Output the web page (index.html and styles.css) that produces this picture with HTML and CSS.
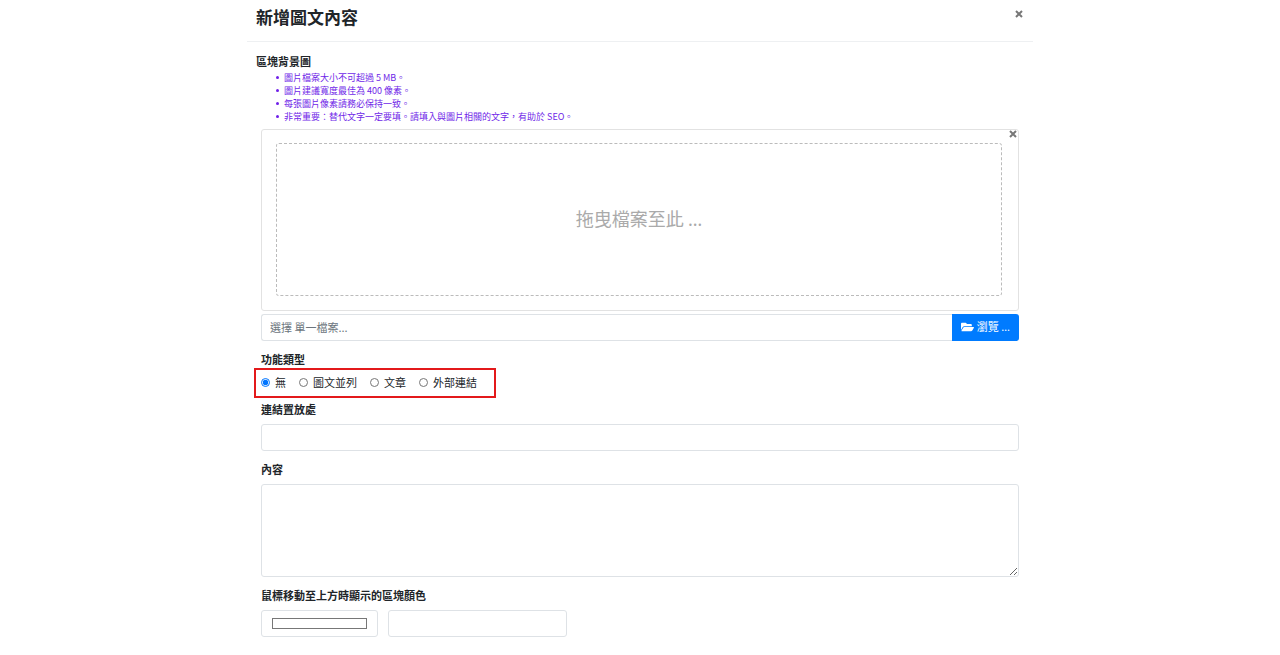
FILE: index.html
```html
<!DOCTYPE html>
<html lang="zh-Hant">
<head>
<meta charset="utf-8">
<meta name="viewport" content="width=device-width, initial-scale=1">
<title>新增圖文內容</title>
<link rel="stylesheet" href="styles.css">
</head>
<body>
<main class="panel">
  <header class="panel-header">
    <h1 class="panel-title">新增圖文內容</h1>
    <button class="close" type="button" aria-label="關閉"><svg class="close-icon" viewBox="0 0 8 8"><path d="M1 1l6 6M7 1L1 7"/></svg></button>
  </header>
  <form class="panel-body">
    <section class="intro">
      <h2 class="label">區塊背景圖</h2>
      <ul class="notes">
        <li class="note">圖片檔案大小不可超過 5 MB。</li>
        <li class="note">圖片建議寬度最佳為 400 像素。</li>
        <li class="note">每張圖片像素請務必保持一致。</li>
        <li class="note">非常重要：替代文字一定要填。請填入與圖片相關的文字，有助於 SEO。</li>
      </ul>
    </section>
    <div class="preview">
      <button class="close preview-close" type="button" aria-label="移除"><svg class="close-icon" viewBox="0 0 8 8"><path d="M1 1l6 6M7 1L1 7"/></svg></button>
      <div class="drop-zone"><span>拖曳檔案至此 <span class="dots">…</span></span></div>
    </div>
    <div class="file-row">
      <input class="control file-name" type="text" placeholder="選擇 單一檔案..." aria-label="選擇 單一檔案" readonly>
      <button class="browse" type="button"><svg class="folder" viewBox="0 0 576 512"><path d="M572.7 292.1L500.300 416.200A64 64 0 0 1 445 448H45.100c-18.500 0-30.100-20.100-20.700-36.100l72.400-124.100A64 64 0 0 1 152 256h400c18.500 0 30 20.100 20.700 36.100zM152 224h328v-48c0-26.500-21.500-48-48-48H272l-64-64H48C21.500 64 0 85.500 0 112v278.100l69.100-118.400A96.200 96.200 0 0 1 152 224z"/></svg><span>瀏覽 <span class="dots">…</span></span></button>
    </div>
    <fieldset class="types">
      <legend class="label">功能類型</legend>
      <div class="options">
        <label class="option"><input class="radio" type="radio" name="type" checked>無</label>
        <label class="option"><input class="radio" type="radio" name="type">圖文並列</label>
        <label class="option"><input class="radio" type="radio" name="type">文章</label>
        <label class="option"><input class="radio" type="radio" name="type">外部連結</label>
      </div>
    </fieldset>
    <div class="field">
      <label class="label" for="link">連結置放處</label>
      <input class="control" id="link" type="text">
    </div>
    <div class="field">
      <label class="label" for="content">內容</label>
      <textarea class="control content" id="content"></textarea>
    </div>
    <div class="field">
      <label class="label" for="color">鼠標移動至上方時顯示的區塊顏色</label>
      <div class="colors">
        <input class="control swatch" id="color" type="color" value="#ffffff">
        <input class="control color-code" type="text" aria-label="色碼">
      </div>
    </div>
  </form>
</main>
</body>
</html>
```
FILE: styles.css
```css
* {
  box-sizing: border-box;
}

body {
  margin: 0;
  background: #fff;
  color: #212529;
  font: 11px/16px "Noto Sans CJK TC", sans-serif;
}

button,
input,
textarea {
  font: inherit;
}

.panel {
  max-width: 786px;
  margin: 0 auto;
}

.panel-header {
  display: flex;
  align-items: flex-start;
  justify-content: space-between;
  padding: 8px;
  border-bottom: 1px solid #eef0f2;
}

.panel-title {
  margin: 0 0 7px;
  padding-left: 1px;
  font-size: 17px;
  font-weight: 700;
  line-height: 18px;
}

.close {
  display: flex;
  padding: 2px;
  border: 0;
  background: none;
  cursor: pointer;
}

.close-icon {
  width: 8px;
  height: 8px;
  fill: none;
  stroke: #777;
  stroke-width: 2;
}

.panel-body {
  padding: 12px 14px;
}

.intro {
  margin: 0 -5px 6px;
}

.label {
  display: block;
  margin: 0;
  padding: 0;
  font-size: 11px;
  font-weight: 700;
  line-height: 15px;
}

.notes {
  margin: 2px 0 0;
  padding-left: 20px;
  color: #6f1fe8;
  font-size: 9px;
  line-height: 13px;
  list-style: none;
}

.note {
  display: flex;
  align-items: center;
  gap: 5px;
}

.note::before {
  content: "";
  width: 3px;
  height: 3px;
  border-radius: 50%;
  background: currentColor;
}

.preview {
  position: relative;
  padding: 13px 16px 14px 14px;
  border: 1px solid #e2e2e2;
  border-radius: 3px;
}

.preview-close {
  position: absolute;
  top: -2px;
  right: -1px;
}

.drop-zone {
  display: grid;
  place-items: center;
  min-height: 153px;
  padding-bottom: 3px;
  border: 1px dashed #bbb;
  border-radius: 3px;
  color: #aaa;
  font-size: 18px;
  line-height: 26px;
}

.dots {
  font-family: "Noto Sans", sans-serif;
}

.file-row {
  display: flex;
  margin: 3px 0 11px;
}

.control {
  display: block;
  width: 100%;
  height: 27px;
  padding: 4px 8px;
  border: 1px solid #dee2e6;
  border-radius: 3px;
  background: #fff;
  color: #495057;
}

.control::placeholder {
  color: #6c757d;
  opacity: 1;
}

.file-name {
  flex: 1;
  padding: 3px 8px 5px;
  border-right: 0;
  border-radius: 3px 0 0 3px;
}

.browse {
  display: flex;
  align-items: center;
  gap: 3px;
  padding: 0 9px 2px;
  border: 0;
  border-radius: 0 3px 3px 0;
  background: #007bff;
  color: #fff;
}

.folder {
  width: 13px;
  height: 12px;
  fill: currentColor;
}

.types {
  margin: 0;
  padding: 0;
  border: 0;
}

.options {
  display: flex;
  width: fit-content;
  gap: 13px;
  margin: 1px 0 4px -7px;
  padding: 4px 17px 6px 5px;
  border: 2px solid #e3191b;
}

.option {
  display: flex;
  align-items: center;
  gap: 5px;
}

.radio {
  width: 9px;
  height: 9px;
  margin: 0;
  accent-color: #0075ff;
}

.field {
  margin-bottom: 11px;
}

.field .label {
  margin-bottom: 7px;
}

.content {
  height: 93px;
  resize: vertical;
}

.colors {
  display: flex;
  gap: 10px;
}

.swatch {
  width: 117px;
  padding: 3px 8px;
}

.color-code {
  width: 179px;
}
```
